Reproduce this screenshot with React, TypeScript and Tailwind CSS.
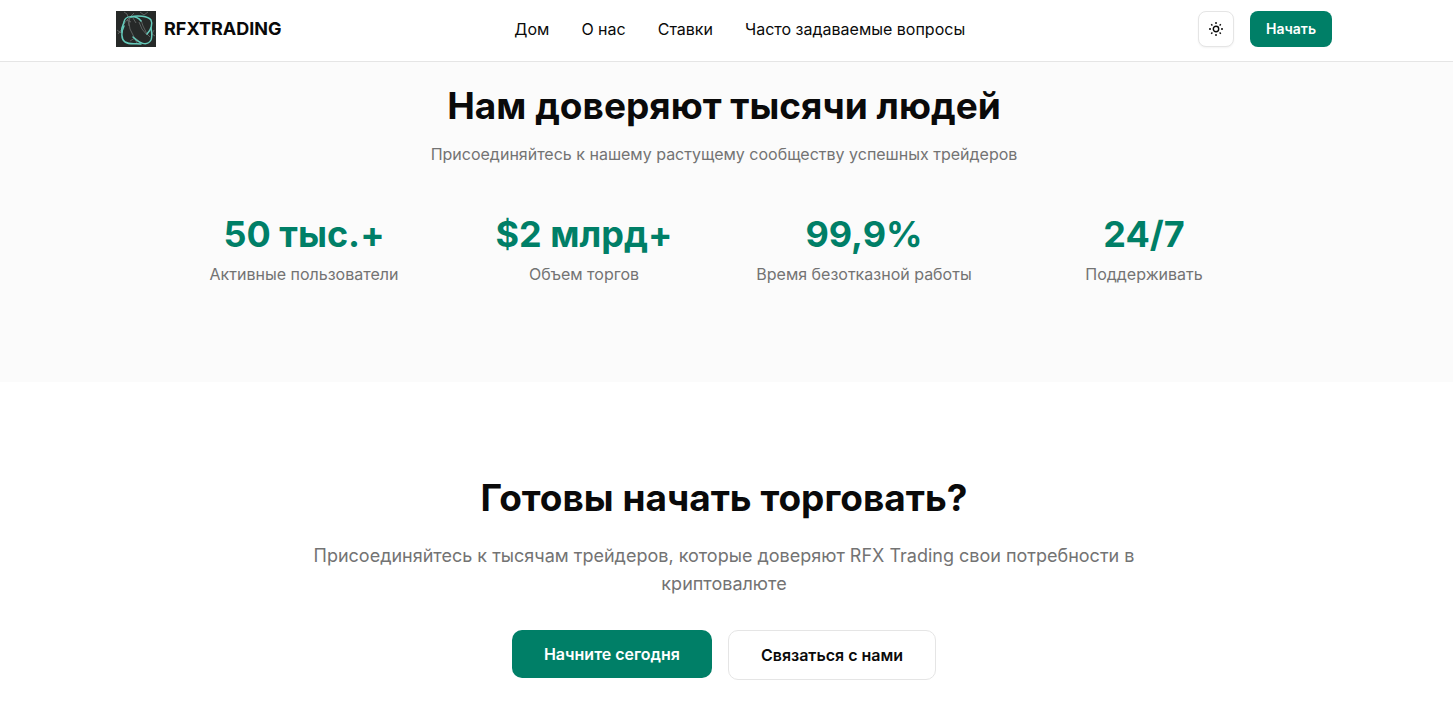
const links = [
  { label: "Дом", href: "#home" },
  { label: "О нас", href: "#about" },
  { label: "Ставки", href: "#rates" },
  { label: "Часто задаваемые вопросы", href: "#faq" },
];

const stats = [
  { value: "50 тыс.+", label: "Активные пользователи" },
  { value: "$2 млрд+", label: "Объем торгов" },
  { value: "99,9%", label: "Время безотказной работы" },
  { value: "24/7", label: "Поддерживать" },
];

function Logo() {
  return (
    <svg viewBox="0 0 40 36" className="h-9 w-10" aria-hidden="true">
      <rect width="40" height="36" fill="#262928" />
      <g fill="none" stroke="#6b706f" strokeWidth="0.8">
        <path d="M8 1l3 2 1 3M1 19l4 3 1-6 4-6 5-4M2 23l4-5M24 1l4 3 4-3" />
        <path d="M14 6l-1 6 1 6 4 8 3 6M12 9l1 6M17 7l3 5M25 9l2 6 4 8 3 3M23 11l3 7 5 6M18 2l-7 7 4 2" />
        <path d="M38 19l-2 4 3 2M14 30l5-3 4 3" />
      </g>
      <g fill="none" stroke="#65cbbb" strokeWidth="1.5" strokeLinecap="round">
        <path d="M25 10C20 4 9 4 8 11C7 15 5 16 6 21" />
        <path d="M15 6C21 4 32 5 35 9C37 13 35 19 31 23" />
        <path d="M8 15C5 21 5 28 9 31C14 34 19 32 25 33" />
        <path d="M17 26C23 32 31 36 35 29C36 26 36 22 35 17" />
      </g>
    </svg>
  );
}

function SunIcon() {
  return (
    <svg
      viewBox="0 0 16 16"
      className="size-4"
      fill="none"
      stroke="currentColor"
      strokeWidth="1.4"
      aria-hidden="true"
    >
      <circle cx="8" cy="8" r="2.7" />
      <path d="M8 1v2M8 13v2M1 8h2M13 8h2M3.2 3.2l1.2 1.2M11.6 11.6l1.2 1.2M3.2 12.8l1.2-1.2M11.6 4.4l1.2-1.2" />
    </svg>
  );
}

export default function App() {
  return (
    <div className="min-h-screen bg-white font-['Inter','Liberation_Sans',sans-serif] text-[#0a0a0a]">
      <header className="border-b border-[#e5e5e5] bg-white pr-[5px]">
        <div className="mx-auto flex h-[61px] max-w-7xl items-center justify-between px-8 pb-1">
          <a href="#home" className="flex items-center gap-2">
            <Logo />
            <span className="text-lg font-bold">RFXTRADING</span>
          </a>
          <nav className="flex items-center gap-8">
            {links.map((link) => (
              <a key={link.href} href={link.href} className="text-base">
                {link.label}
              </a>
            ))}
          </nav>
          <div className="flex items-center gap-4">
            <button
              type="button"
              aria-label="Сменить тему"
              className="flex size-9 items-center justify-center rounded-lg border border-[#e5e5e5] bg-white shadow-xs"
            >
              <SunIcon />
            </button>
            <button type="button" className="h-9 rounded-lg bg-[#007f67] px-4 text-sm font-semibold text-white">
              Начать
            </button>
          </div>
        </div>
      </header>
      <main>
        <section className="bg-[#fbfbfb] pt-6 pr-[5px] pb-24 text-center">
          <div className="mx-auto max-w-6xl px-8">
            <h2 className="mb-4 text-[37px] leading-10 font-bold">Нам доверяют тысячи людей</h2>
            <p className="mb-12 text-base text-[#737373]">
              Присоединяйтесь к нашему растущему сообществу успешных трейдеров
            </p>
            <dl className="grid grid-cols-4 gap-8">
              {stats.map((stat) => (
                <div key={stat.label} className="flex flex-col-reverse gap-2">
                  <dt className="text-base whitespace-nowrap text-[#737373]">{stat.label}</dt>
                  <dd className="text-4xl font-bold text-[#007f67]">{stat.value}</dd>
                </div>
              ))}
            </dl>
          </div>
        </section>
        <section className="pt-24 pr-[5px] pb-10 text-center">
          <div className="mx-auto max-w-4xl px-8">
            <h2 className="mb-6 text-[37px] leading-10 font-bold">Готовы начать торговать?</h2>
            <p className="mb-8 text-lg text-[#737373]">
              Присоединяйтесь к тысячам трейдеров, которые доверяют RFX Trading свои потребности в криптовалюте
            </p>
            <div className="flex items-start justify-center gap-4">
              <a href="#start" className="rounded-[10px] bg-[#007f67] px-8 py-3 font-semibold text-white">
                Начните сегодня
              </a>
              <a href="#contact" className="rounded-[10px] border border-[#e5e5e5] px-8 py-3 font-semibold">
                Связаться с нами
              </a>
            </div>
          </div>
        </section>
      </main>
    </div>
  );
}
